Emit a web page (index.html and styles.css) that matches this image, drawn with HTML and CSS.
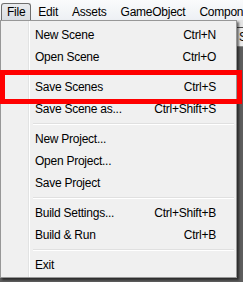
FILE: index.html
```html
<!DOCTYPE html>
<html lang="en">
<head>
  <meta charset="UTF-8">
  <title>File menu</title>
  <link rel="stylesheet" href="styles.css">
</head>
<body>
  <!-- Barra dei menu -->
  <div class="menubar">
    <span class="menu-title active">File</span>
    <span class="menu-title">Edit</span>
    <span class="menu-title">Assets</span>
    <span class="menu-title">GameObject</span>
    <span class="menu-title">Component</span>
  </div>

  <!-- Area di lavoro dietro il menu -->
  <div class="workspace">
    <div class="toolbar"></div>
    <div class="tabs">
      <span class="tab">Scene</span>
    </div>
  </div>

  <!-- Menu a tendina File -->
  <div class="dropdown">
    <div class="item"><span>New Scene</span><span>Ctrl+N</span></div>
    <div class="item"><span>Open Scene</span><span>Ctrl+O</span></div>
    <div class="separator"></div>
    <div class="item"><span>Save Scenes</span><span>Ctrl+S</span></div>
    <div class="item"><span>Save Scene as...</span><span>Ctrl+Shift+S</span></div>
    <div class="separator"></div>
    <div class="item"><span>New Project...</span></div>
    <div class="item"><span>Open Project...</span></div>
    <div class="item"><span>Save Project</span></div>
    <div class="separator"></div>
    <div class="item"><span>Build Settings...</span><span>Ctrl+Shift+B</span></div>
    <div class="item"><span>Build &amp; Run</span><span>Ctrl+B</span></div>
    <div class="separator"></div>
    <div class="item"><span>Exit</span></div>
  </div>

  <!-- Riquadro rosso di evidenziazione -->
  <div class="highlight"></div>
</body>
</html>
```

FILE: styles.css
```css
body {
  margin: 0;
  width: 243px;
  height: 282px;
  overflow: hidden;
  position: relative;
  background-color: #5e5e5e;
  font-family: "Liberation Sans", Arial, sans-serif;
  font-size: 12px;
  letter-spacing: -0.25px;
  color: black;
}
.menubar {
  height: 20px;
  display: flex;
  white-space: nowrap;
  overflow: hidden;
  background: linear-gradient(#fafbfc, #edf0f4);
}
.menu-title {
  height: 17px;
  line-height: 17px;
  margin-top: 3px;
  padding: 0 6px;
  border: 1px solid transparent;
  border-bottom: none;
}
.menu-title:first-child {
  margin-left: 1px;
  padding: 0 5px;
}
.menu-title.active {
  border-color: #6f6f6f;
  border-radius: 3px 3px 0 0;
  background: linear-gradient(#e9ebee, #d9dde2);
}
.workspace {
  height: 262px;
  display: flex;
  flex-direction: column;
}
.toolbar {
  height: 7px;
  background-color: #e4e4e4;
}
.tabs {
  height: 19px;
  display: flex;
  padding-left: 236px;
  background-color: #8a8a8a;
  border-top: 1px solid #4a4a4a;
}
.tab {
  height: 18px;
  line-height: 18px;
  padding-left: 2px;
  background-color: #ececec;
  border-left: 1px solid #777;
}
/* Menu a tendina */
.dropdown {
  position: absolute;
  top: 20px;
  left: 0;
  width: 231px;
  padding: 3px 2px 1px 2px;
  border: 1px solid #979797;
  background-color: #f0f0f0;
  background-image: linear-gradient(to right, transparent 27px, #e2e3e3 27px, #e2e3e3 28px, #ffffff 28px, #ffffff 29px, transparent 29px);
  box-shadow: 2px 2px 2px rgba(0, 0, 0, 0.55);
}
.item {
  height: 22px;
  display: flex;
  align-items: center;
  justify-content: space-between;
  padding: 0 18px 0 32px;
  white-space: nowrap;
}
.separator {
  height: 1px;
  margin: 3px 0 3px 30px;
  border-top: 1px solid #e0e0e0;
  background-color: #ffffff;
}
/* Riquadro rosso */
.highlight {
  position: absolute;
  left: 0;
  top: 70px;
  width: 232px;
  height: 24px;
  border: 5px solid #ff0000;
}
```
